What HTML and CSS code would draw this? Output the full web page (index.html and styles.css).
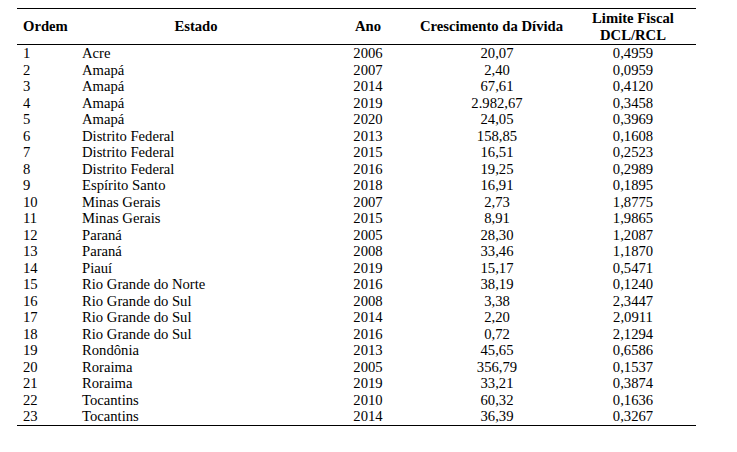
FILE: index.html
```html
<!DOCTYPE html>
<html lang="pt">
<head>
<meta charset="utf-8">
<title>Tabela</title>
<link rel="stylesheet" href="styles.css">
</head>
<body>
<table class="data">
<colgroup>
<col class="c-ordem"><col class="c-estado"><col class="c-ano"><col class="c-cresc"><col class="c-lim">
</colgroup>
<thead>
<tr><th class="l">Ordem</th><th>Estado</th><th>Ano</th><th class="wide">Crescimento da Dívida</th><th>Limite Fiscal<br>DCL/RCL</th></tr>
</thead>
<tbody>
<tr><td>1</td><td>Acre</td><td class="c">2006</td><td class="c v">20,07</td><td class="c">0,4959</td></tr>
<tr><td>2</td><td>Amapá</td><td class="c">2007</td><td class="c v">2,40</td><td class="c">0,0959</td></tr>
<tr><td>3</td><td>Amapá</td><td class="c">2014</td><td class="c v">67,61</td><td class="c">0,4120</td></tr>
<tr><td>4</td><td>Amapá</td><td class="c">2019</td><td class="c v">2.982,67</td><td class="c">0,3458</td></tr>
<tr><td>5</td><td>Amapá</td><td class="c">2020</td><td class="c v">24,05</td><td class="c">0,3969</td></tr>
<tr><td>6</td><td>Distrito Federal</td><td class="c">2013</td><td class="c v">158,85</td><td class="c">0,1608</td></tr>
<tr><td>7</td><td>Distrito Federal</td><td class="c">2015</td><td class="c v">16,51</td><td class="c">0,2523</td></tr>
<tr><td>8</td><td>Distrito Federal</td><td class="c">2016</td><td class="c v">19,25</td><td class="c">0,2989</td></tr>
<tr><td>9</td><td>Espírito Santo</td><td class="c">2018</td><td class="c v">16,91</td><td class="c">0,1895</td></tr>
<tr><td>10</td><td>Minas Gerais</td><td class="c">2007</td><td class="c v">2,73</td><td class="c">1,8775</td></tr>
<tr><td>11</td><td>Minas Gerais</td><td class="c">2015</td><td class="c v">8,91</td><td class="c">1,9865</td></tr>
<tr><td>12</td><td>Paraná</td><td class="c">2005</td><td class="c v">28,30</td><td class="c">1,2087</td></tr>
<tr><td>13</td><td>Paraná</td><td class="c">2008</td><td class="c v">33,46</td><td class="c">1,1870</td></tr>
<tr><td>14</td><td>Piauí</td><td class="c">2019</td><td class="c v">15,17</td><td class="c">0,5471</td></tr>
<tr><td>15</td><td>Rio Grande do Norte</td><td class="c">2016</td><td class="c v">38,19</td><td class="c">0,1240</td></tr>
<tr><td>16</td><td>Rio Grande do Sul</td><td class="c">2008</td><td class="c v">3,38</td><td class="c">2,3447</td></tr>
<tr><td>17</td><td>Rio Grande do Sul</td><td class="c">2014</td><td class="c v">2,20</td><td class="c">2,0911</td></tr>
<tr><td>18</td><td>Rio Grande do Sul</td><td class="c">2016</td><td class="c v">0,72</td><td class="c">2,1294</td></tr>
<tr><td>19</td><td>Rondônia</td><td class="c">2013</td><td class="c v">45,65</td><td class="c">0,6586</td></tr>
<tr><td>20</td><td>Roraima</td><td class="c">2005</td><td class="c v">356,79</td><td class="c">0,1537</td></tr>
<tr><td>21</td><td>Roraima</td><td class="c">2019</td><td class="c v">33,21</td><td class="c">0,3874</td></tr>
<tr><td>22</td><td>Tocantins</td><td class="c">2010</td><td class="c v">60,32</td><td class="c">0,1636</td></tr>
<tr><td>23</td><td>Tocantins</td><td class="c">2014</td><td class="c v">36,39</td><td class="c">0,3267</td></tr>
</tbody>
</table>
</body>
</html>
```
FILE: styles.css
```css
html, body {
  margin: 0;
  background: #fff;
}
body {
  padding: 8px 0 0 17px;
  font-family: "Liberation Serif", "Times New Roman", serif;
  font-size: 14.67px;
  color: #000;
}
.data {
  border-collapse: collapse;
  table-layout: fixed;
  width: 679px;
  font-family: "Liberation Serif", "Times New Roman", serif;
}
.c-ordem { width: 59px; }
.c-estado { width: 240px; }
.c-ano { width: 104px; }
.c-cresc { width: 150px; }
.c-lim { width: 126px; }
.data thead tr {
  border-top: 1px solid #000;
  border-bottom: 1px solid #000;
}
.data tbody tr:last-child {
  border-bottom: 1px solid #000;
}
.data th {
  font-family: "Liberation Serif", "Times New Roman", serif;
  font-weight: bold;
  text-align: center;
  vertical-align: middle;
  line-height: 16.5px;
  padding: 1px 6px;
  white-space: nowrap;
}
.data th.l {
  text-align: left;
}
.data th.wide {
  padding: 1px 8px 1px 0;
}
.data td {
  font-family: "Liberation Serif", "Times New Roman", serif;
  line-height: 16.5px;
  padding: 0 6px;
  text-align: left;
  white-space: nowrap;
}
.data td.c {
  text-align: center;
}
.data td.v {
  padding-left: 10px;
}
```
